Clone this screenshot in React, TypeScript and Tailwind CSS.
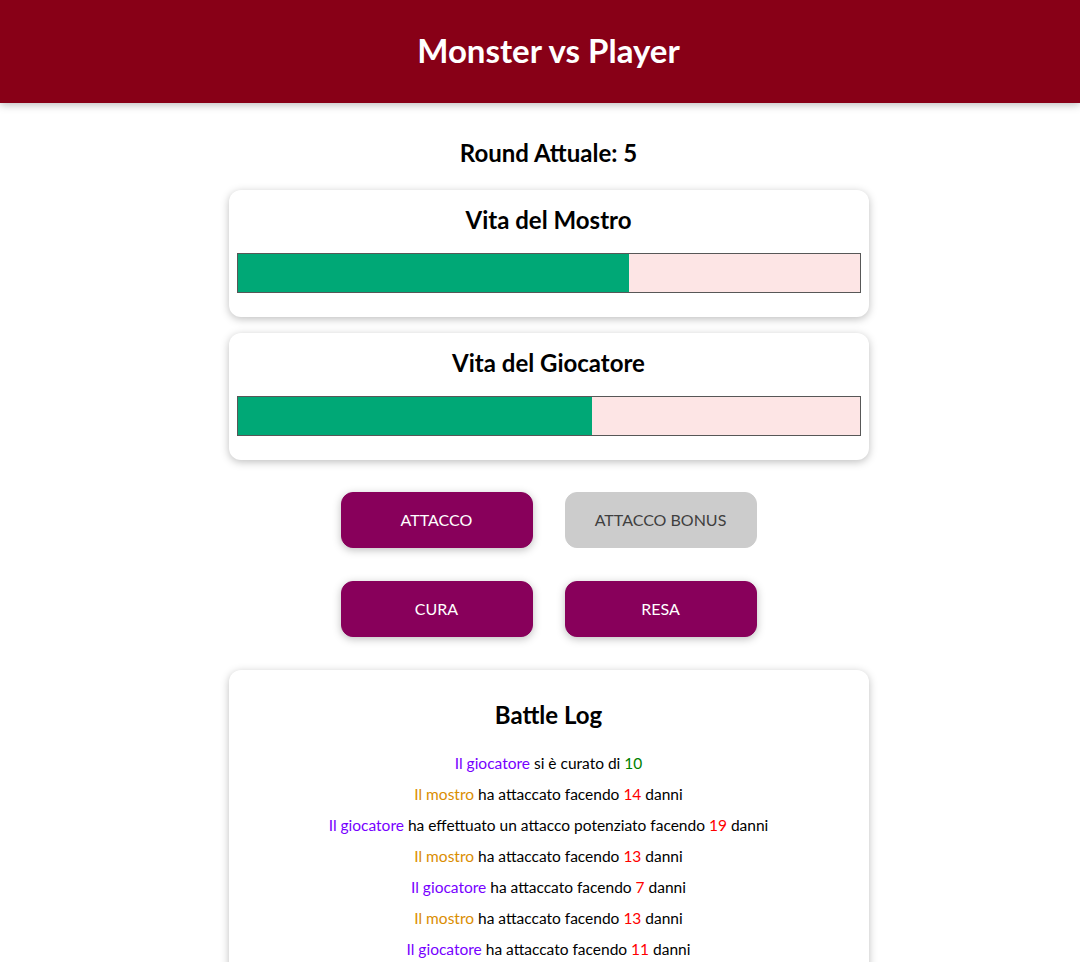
import React from 'react';

type LogEntry = { by: 'player' | 'monster'; action: string; value: number; kind: 'damage' | 'heal' };

const log: LogEntry[] = [
  { by: 'player', action: 'heal', value: 10, kind: 'heal' },
  { by: 'monster', action: 'attack', value: 14, kind: 'damage' },
  { by: 'player', action: 'special', value: 19, kind: 'damage' },
  { by: 'monster', action: 'attack', value: 13, kind: 'damage' },
  { by: 'player', action: 'attack', value: 7, kind: 'damage' },
  { by: 'monster', action: 'attack', value: 13, kind: 'damage' },
  { by: 'player', action: 'attack', value: 11, kind: 'damage' },
  { by: 'monster', action: 'attack', value: 13, kind: 'damage' },
];

function HealthCard({ title, value }: { title: string; value: number }) {
  return (
    <section className="w-[90%] max-w-[40rem] mx-auto bg-white rounded-[12px] shadow-[0_2px_8px_rgba(0,0,0,0.26)] px-2 pt-[13px] pb-2 text-center">
      <h2 className="text-[24px] leading-[34px] font-bold">{title}</h2>
      <div className="w-full h-10 border border-[#575757] bg-[#fde5e5] my-4">
        <div className="h-full bg-[#00a876]" style={{ width: `${value}%` }} />
      </div>
    </section>
  );
}

function LogLine({ entry }: { entry: LogEntry }) {
  const who = entry.by === 'player' ? 'Il giocatore' : 'Il mostro';
  const whoColor = entry.by === 'player' ? 'text-[#7700ff]' : 'text-[#da8d00]';
  return (
    <li className="leading-[23px]">
      <span className={whoColor}>{who}</span>
      {entry.kind === 'heal' ? (
        <>
          {' si è curato di '}
          <span className="text-[green]">{entry.value}</span>
        </>
      ) : (
        <>
          {entry.action === 'special'
            ? ' ha effettuato un attacco potenziato facendo '
            : ' ha attaccato facendo '}
          <span className="text-[red]">{entry.value}</span>
          {' danni'}
        </>
      )}
    </li>
  );
}

export default function App() {
  const btn =
    'w-48 h-14 rounded-[12px] border border-[#88005b] bg-[#88005b] text-white text-base shadow-[0_2px_8px_rgba(0,0,0,0.26)] cursor-pointer';
  return (
    <div className="min-h-screen bg-white text-black font-['Lato',sans-serif]">
      <header className="h-[103px] bg-[#880017] text-white flex items-center justify-center shadow-[0_2px_8px_rgba(0,0,0,0.26)]">
        <h1 className="text-[33px] font-bold leading-[44px] pl-[17px] -mt-1">Monster vs Player</h1>
      </header>

      <div className="pl-[17px]">
        <h2 className="text-center text-[24px] font-bold leading-[34px] mt-[33px] mb-[20px]">Round Attuale: 5</h2>

        <div className="flex flex-col gap-4">
          <HealthCard title="Vita del Mostro" value={63} />
          <HealthCard title="Vita del Giocatore" value={57} />
        </div>

        <div className="w-[90%] max-w-[40rem] mx-auto flex flex-col items-center gap-[33px] pt-8 pb-[33px]">
          <div className="flex gap-8">
            <button className={btn}>ATTACCO</button>
            <button
              disabled
              className="w-48 h-14 rounded-[12px] border border-[#ccc] bg-[#ccc] text-[#3f3f3f] text-base"
            >
              ATTACCO BONUS
            </button>
          </div>
          <div className="flex gap-8">
            <button className={btn}>CURA</button>
            <button className={btn}>RESA</button>
          </div>
        </div>

        <section className="w-[90%] max-w-[40rem] mx-auto bg-white rounded-[12px] shadow-[0_2px_8px_rgba(0,0,0,0.26)] px-2 pt-[28px] pb-4 mb-4 text-center">
          <h2 className="text-[24px] leading-[34px] font-bold mb-5">Battle Log</h2>
          <ul className="flex flex-col gap-2 text-[15.5px]">
            {log.map((e, i) => (
              <LogLine key={i} entry={e} />
            ))}
          </ul>
        </section>
      </div>
    </div>
  );
}
